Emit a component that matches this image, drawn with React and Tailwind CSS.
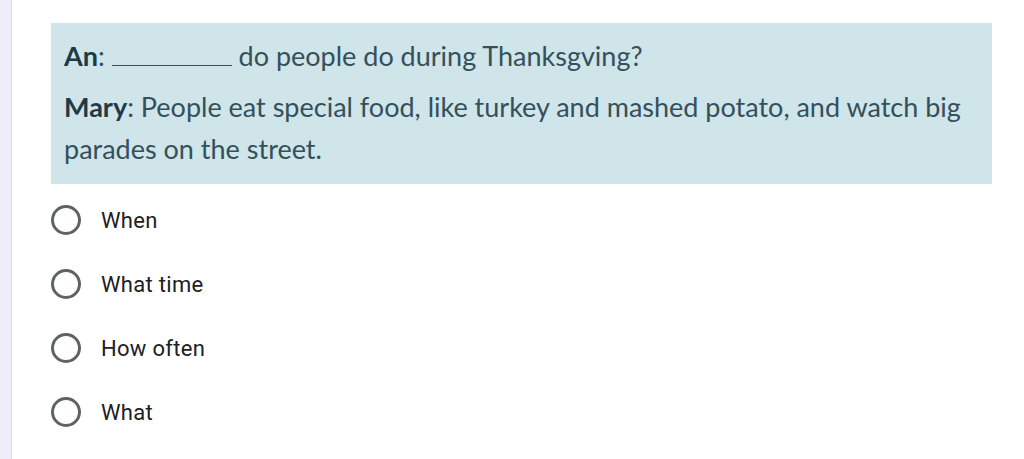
export default function App() {
  const options = ["When", "What time", "How often", "What"]

  return (
    <div className="flex h-[459px] w-[1024px] overflow-hidden bg-white">
      <div className="w-[12px] shrink-0 border-r border-[#dcdaf0] bg-[#eeedf9]" />
      <div className="flex-1 pl-[39px] pr-[32px] pt-[23px]">
        <div
          className="bg-[#cfe5ea] px-[13px] pb-[14px] pt-[12px] text-[27px] leading-[42px] text-[#34505b]"
          style={{ fontFamily: "Lato, 'Open Sans', sans-serif" }}
        >
          <p className="mb-[9px]">
            <span className="font-bold text-[#1f3a46]">An</span>:{" "}
            <span className="inline-block h-[1.5px] w-[120px] bg-[#34505b] align-baseline" />{" "}
            do people do during Thanksgving?
          </p>
          <p>
            <span className="font-bold text-[#1f3a46]">Mary</span>: People eat special food, like turkey and mashed potato, and watch big parades on the street.
          </p>
        </div>

        <div className="mt-[21px] flex flex-col gap-[34px]" style={{ fontFamily: "Roboto, sans-serif" }}>
          {options.map((opt) => (
            <label key={opt} className="flex h-[30px] items-center">
              <span className="h-[30px] w-[30px] shrink-0 rounded-full border-[3px] border-[#5f6368]" />
              <span className="ml-[20px] text-[22px] tracking-[0.3px] text-[#202124]">{opt}</span>
            </label>
          ))}
        </div>
      </div>
    </div>
  )
}
